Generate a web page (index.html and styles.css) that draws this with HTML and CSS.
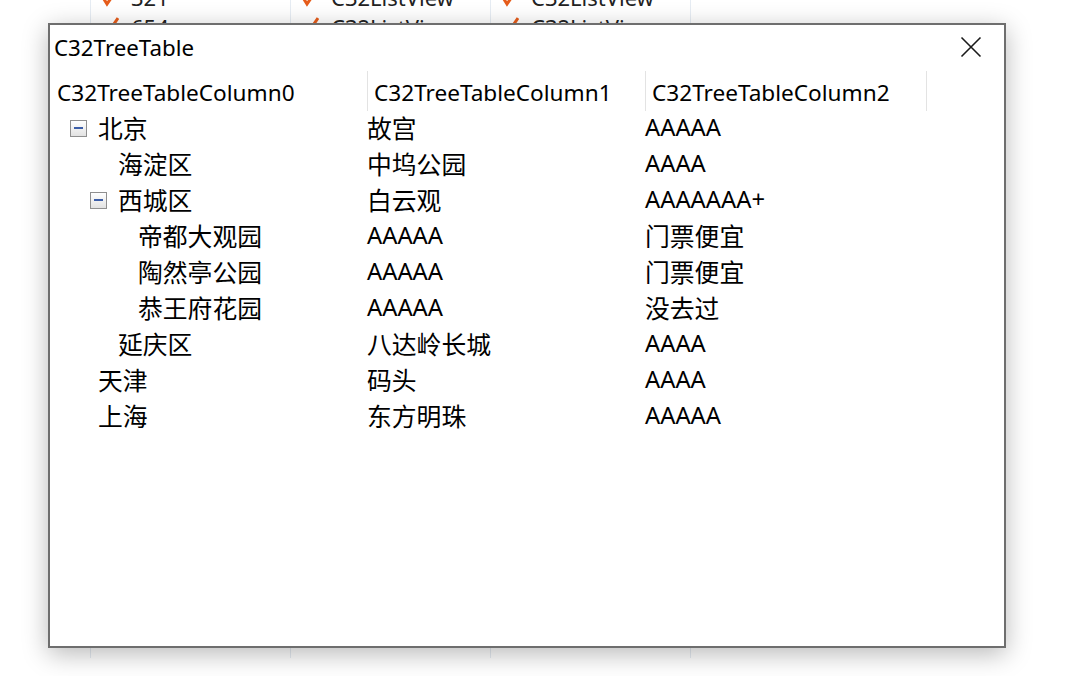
FILE: index.html
```html
<!DOCTYPE html>
<html>
<head>
<meta charset="utf-8">
<link rel="stylesheet" href="styles.css">
</head>
<body>
<div class="bglist">
  <div class="bgcol first"></div>
  <div class="bgcol">
    <div class="bgrow"><svg class="chk" viewBox="0 0 20 20"><path d="M3 9 L8 17 L19 1" fill="none" stroke="#e65c1a" stroke-width="3"/></svg><span>321</span></div>
    <div class="bgrow"><svg class="chk" viewBox="0 0 20 20"><path d="M3 9 L8 17 L19 1" fill="none" stroke="#e65c1a" stroke-width="3"/></svg><span>654</span></div>
  </div>
  <div class="bgcol">
    <div class="bgrow"><svg class="chk" viewBox="0 0 20 20"><path d="M3 9 L8 17 L19 1" fill="none" stroke="#e65c1a" stroke-width="3"/></svg><span>C32ListView</span></div>
    <div class="bgrow"><svg class="chk" viewBox="0 0 20 20"><path d="M3 9 L8 17 L19 1" fill="none" stroke="#e65c1a" stroke-width="3"/></svg><span>C32ListView</span></div>
  </div>
  <div class="bgcol">
    <div class="bgrow"><svg class="chk" viewBox="0 0 20 20"><path d="M3 9 L8 17 L19 1" fill="none" stroke="#e65c1a" stroke-width="3"/></svg><span>C32ListView</span></div>
    <div class="bgrow"><svg class="chk" viewBox="0 0 20 20"><path d="M3 9 L8 17 L19 1" fill="none" stroke="#e65c1a" stroke-width="3"/></svg><span>C32ListView</span></div>
  </div>
  <div class="bgcol last"></div>
</div>

<div class="dialog">
  <div class="titlebar">
    <span class="title">C32TreeTable</span>
    <svg class="close" viewBox="0 0 22 22"><path d="M1.5 1.5 L20.5 20.5 M20.5 1.5 L1.5 20.5" stroke="#1a1a1a" stroke-width="1.6" fill="none"/></svg>
  </div>
  <div class="table">
    <div class="header">
      <div class="hcell c0">C32TreeTableColumn0</div>
      <div class="hcell c1">C32TreeTableColumn1</div>
      <div class="hcell c2">C32TreeTableColumn2</div>
    </div>
    <div class="row">
      <div class="cell c0 l0"><span class="tog"></span><span class="zh">北京</span></div>
      <div class="cell c1 zh">故宫</div>
      <div class="cell c2">AAAAA</div>
    </div>
    <div class="row">
      <div class="cell c0 l1"><span class="leaf"></span><span class="zh">海淀区</span></div>
      <div class="cell c1 zh">中坞公园</div>
      <div class="cell c2">AAAA</div>
    </div>
    <div class="row">
      <div class="cell c0 l1"><span class="tog"></span><span class="zh">西城区</span></div>
      <div class="cell c1 zh">白云观</div>
      <div class="cell c2">AAAAAAA+</div>
    </div>
    <div class="row">
      <div class="cell c0 l2"><span class="leaf"></span><span class="zh">帝都大观园</span></div>
      <div class="cell c1">AAAAA</div>
      <div class="cell c2 zh">门票便宜</div>
    </div>
    <div class="row">
      <div class="cell c0 l2"><span class="leaf"></span><span class="zh">陶然亭公园</span></div>
      <div class="cell c1">AAAAA</div>
      <div class="cell c2 zh">门票便宜</div>
    </div>
    <div class="row">
      <div class="cell c0 l2"><span class="leaf"></span><span class="zh">恭王府花园</span></div>
      <div class="cell c1">AAAAA</div>
      <div class="cell c2 zh">没去过</div>
    </div>
    <div class="row">
      <div class="cell c0 l1"><span class="leaf"></span><span class="zh">延庆区</span></div>
      <div class="cell c1 zh">八达岭长城</div>
      <div class="cell c2">AAAA</div>
    </div>
    <div class="row">
      <div class="cell c0 l0"><span class="leaf"></span><span class="zh">天津</span></div>
      <div class="cell c1 zh">码头</div>
      <div class="cell c2">AAAA</div>
    </div>
    <div class="row">
      <div class="cell c0 l0"><span class="leaf"></span><span class="zh">上海</span></div>
      <div class="cell c1 zh">东方明珠</div>
      <div class="cell c2">AAAAA</div>
    </div>
  </div>
</div>
</body>
</html>
```

FILE: styles.css
```css
* { box-sizing: border-box; }
html, body {
  margin: 0;
  padding: 0;
  width: 1079px;
  height: 676px;
  overflow: hidden;
  background: #ffffff;
  font-family: "Noto Sans", "Noto Sans CJK SC", sans-serif;
  color: #000;
}

.bglist {
  display: flex;
  height: 676px;
  margin-top: -18px;
}
.bgcol {
  width: 200px;
  border-left: 1px solid #e6ecf3;
  flex: none;
}
.bgcol.first { width: 90px; border-left: none; }
.bgcol.last { width: 389px; }
.bgrow {
  height: 30px;
  display: flex;
  align-items: center;
  gap: 12px;
  padding-left: 8px;
  font-size: 22px;
  color: #222;
}
.chk { width: 20px; height: 20px; flex: none; }

.dialog {
  position: absolute;
  left: 48px;
  top: 23px;
  width: 958px;
  height: 625px;
  background: #fff;
  border: 2px solid #6e6e6e;
  box-shadow: 0 6px 24px rgba(0, 0, 0, 0.28);
  display: flex;
  flex-direction: column;
}

.titlebar {
  height: 46px;
  display: flex;
  align-items: center;
  justify-content: space-between;
  padding-left: 4px;
  padding-right: 22px;
  padding-bottom: 2px;
}
.title { font-size: 22.3px; }
.close { width: 22px; height: 22px; }

.table { display: flex; flex-direction: column; }
.header {
  display: flex;
  height: 40px;
  align-items: stretch;
}
.hcell {
  font-size: 22.6px;
  display: flex;
  align-items: center;
  padding-left: 6px;
  padding-top: 2px;
  white-space: nowrap;
}
.hcell.c0 { padding-left: 7px; }
.hcell.c1, .hcell.c2 { border-left: 1px solid #e3e3e3; }
.hcell.c2 { border-right: 1px solid #e3e3e3; }

.c0 { width: 317px; flex: none; }
.c1 { width: 278px; flex: none; }
.c2 { width: 282px; flex: none; }

.row { display: flex; height: 36px; }
.cell {
  font-size: 23.8px;
  display: flex;
  align-items: center;
  padding-bottom: 5px;
  white-space: nowrap;
}
.zh { font-size: 24.8px; }
.cell.c0 { gap: 11px; }
.cell.l0 { padding-left: 20px; }
.cell.l1 { padding-left: 40px; }
.cell.l2 { padding-left: 60px; }

.tog, .leaf { width: 17px; height: 17px; flex: none; }
.tog {
  border: 1px solid #8f8f8f;
  background: linear-gradient(#ffffff, #e2e2e2);
  position: relative;
  margin-top: 3px;
}
.tog::after {
  content: "";
  position: absolute;
  left: 3px;
  top: 6px;
  width: 9px;
  height: 2px;
  background: #3c5ea8;
}
```
